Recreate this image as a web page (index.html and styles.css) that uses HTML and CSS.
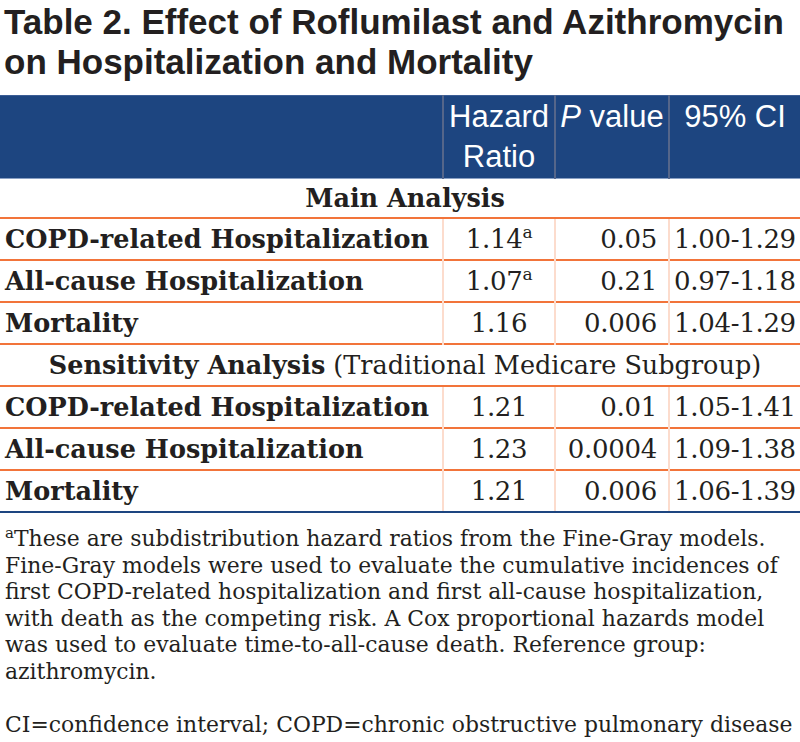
FILE: index.html
```html
<!DOCTYPE html>
<html>
<head>
<meta charset="utf-8">
<link rel="stylesheet" href="styles.css">
</head>
<body>
<h1 class="title">Table 2. Effect of Roflumilast and Azithromycin<br>on Hospitalization and Mortality</h1>
<table class="tbl">
  <colgroup>
    <col class="c1"><col class="c2"><col class="c3"><col class="c4">
  </colgroup>
  <thead>
    <tr class="head">
      <th></th>
      <th>Hazard<br>Ratio</th>
      <th><i>P</i> value</th>
      <th>95% CI</th>
    </tr>
  </thead>
  <tbody>
    <tr class="section first"><td colspan="4"><b>Main Analysis</b></td></tr>
    <tr><td class="lbl">COPD-related Hospitalization</td><td class="hr">1.14<sup>a</sup></td><td class="p">0.05</td><td class="ci">1.00-1.29</td></tr>
    <tr><td class="lbl">All-cause Hospitalization</td><td class="hr">1.07<sup>a</sup></td><td class="p">0.21</td><td class="ci">0.97-1.18</td></tr>
    <tr><td class="lbl">Mortality</td><td class="hr">1.16</td><td class="p">0.006</td><td class="ci">1.04-1.29</td></tr>
    <tr class="section"><td colspan="4"><b>Sensitivity Analysis</b> (Traditional Medicare Subgroup)</td></tr>
    <tr><td class="lbl">COPD-related Hospitalization</td><td class="hr">1.21</td><td class="p">0.01</td><td class="ci">1.05-1.41</td></tr>
    <tr><td class="lbl">All-cause Hospitalization</td><td class="hr">1.23</td><td class="p">0.0004</td><td class="ci">1.09-1.38</td></tr>
    <tr class="last"><td class="lbl">Mortality</td><td class="hr">1.21</td><td class="p">0.006</td><td class="ci">1.06-1.39</td></tr>
  </tbody>
</table>
<div class="notes">
  <p class="note"><sup>a</sup>These are subdistribution hazard ratios from the Fine-Gray models.<br>Fine-Gray models were used to evaluate the cumulative incidences of<br>first COPD-related hospitalization and first all-cause hospitalization,<br>with death as the competing risk. A Cox proportional hazards model<br>was used to evaluate time-to-all-cause death. Reference group:<br>azithromycin.</p>
  <p class="note abbr">CI=confidence interval; COPD=chronic obstructive pulmonary disease</p>
</div>
</body>
</html>
```

FILE: styles.css
```css
html, body {
  margin: 0;
  padding: 0;
  background: #ffffff;
}
body {
  width: 800px;
  color: #231f20;
}
.title {
  margin: 0;
  padding: 2px 0 0 4px;
  height: 95px;
  box-sizing: border-box;
  font-family: "Liberation Sans", Arial, sans-serif;
  font-weight: bold;
  font-size: 35px;
  line-height: 40px;
  color: #231f20;
  white-space: nowrap;
}
.tbl {
  width: 800px;
  border-collapse: collapse;
  table-layout: fixed;
  font-family: "DejaVu Serif", serif;
}
.c1 { width: 443px; }
.c2 { width: 112px; }
.c3 { width: 114px; }
.c4 { width: 131px; }
.head th {
  background: #1d4580;
  color: #ffffff;
  font-family: "Liberation Sans", Arial, sans-serif;
  font-weight: normal;
  font-size: 31px;
  line-height: 40px;
  height: 83px;
  vertical-align: top;
  padding: 1px 0 0 0;
  box-sizing: border-box;
  text-align: center;
  border-left: 2px solid #55668a;
  border-top: 1px solid #3b5d95;
}
.head th:first-child {
  border-left: none;
}
.head th i {
  font-style: italic;
}
.tbl td {
  height: 40px;
  padding: 0;
  border-top: 2px solid #f2743a;
  border-left: 2px solid #fcdccd;
  font-size: 25.5px;
  vertical-align: middle;
}
.tbl td:first-child {
  border-left: none;
}
.section td {
  text-align: center;
  font-size: 25.5px;
  padding-left: 10px;
}
.section.first td {
  border-top: 1px solid #8aa0c4;
  height: 38px;
}
.section b {
  font-weight: bold;
}
.lbl {
  font-weight: bold;
  padding-left: 5px !important;
  white-space: nowrap;
}
.hr, .p, .ci {
  font-family: "DejaVu Serif", serif;
  font-size: 26px !important;
  letter-spacing: -0.3px;
}
.hr {
  text-align: center;
}
.p {
  text-align: right;
  padding-right: 11px !important;
}
.ci {
  text-align: left;
  padding-left: 4px !important;
  white-space: nowrap;
}
.hr sup {
  font-size: 17px;
  line-height: 0;
  vertical-align: 10px;
}
.last td {
  border-bottom: 2px solid #1d4580;
}
.notes {
  padding: 13px 0 0 5px;
  font-family: "DejaVu Serif", serif;
  font-size: 21.9px;
  line-height: 26.6px;
  white-space: nowrap;
}
.note {
  margin: 0;
}
.note sup {
  font-size: 15px;
  line-height: 0;
  vertical-align: 8px;
}
.abbr {
  margin-top: 26.6px;
}
```
